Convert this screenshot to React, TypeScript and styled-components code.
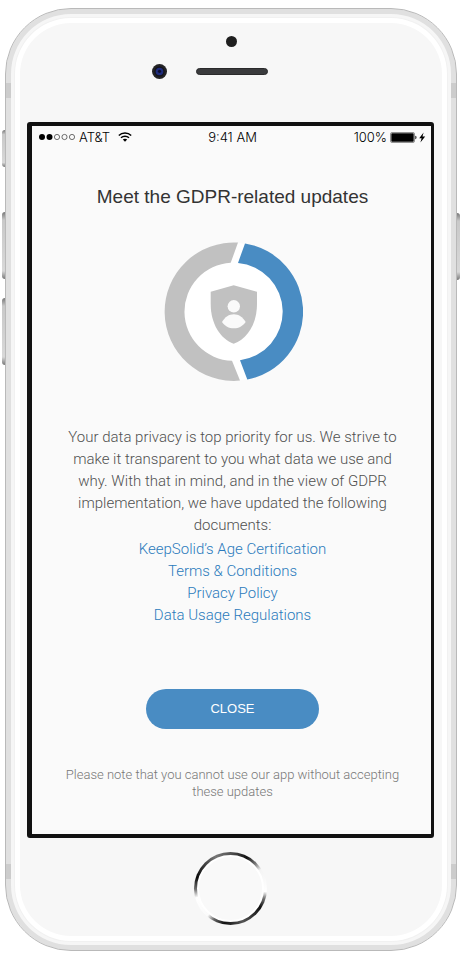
import React from "react";
import styled, { createGlobalStyle } from "styled-components";

const GlobalStyle = createGlobalStyle`
  *, *::before, *::after { box-sizing: border-box; }
  body {
    margin: 0;
    background: #ffffff;
    font-family: "Liberation Sans", Arial, sans-serif;
    color: #333333;
  }
`;

const Page = styled.div`
  padding: 8px 5px 4px;
`;

const Phone = styled.div`
  position: relative;
  display: flex;
  flex-direction: column;
  padding: 0 22px 0 21px;
  border: 1px solid #b9b9b9;
  border-radius: 66px;
  background: #f7f7f7;
  box-shadow:
    inset 0 0 0 5px #e0e0e0,
    inset 0 0 0 8px #f6f6f6,
    inset 0 0 0 9px #f1f1f1,
    inset 0 0 0 14px #ffffff;
`;

const SideKey = styled.span<{ $side: "left" | "right"; $top: number; $height: number }>`
  position: absolute;
  ${(p) => p.$side}: -4px;
  top: ${(p) => p.$top}px;
  width: 3px;
  height: ${(p) => p.$height}px;
  border-radius: ${(p) => (p.$side === "left" ? "3px 0 0 3px" : "0 3px 3px 0")};
  background: linear-gradient(#777777, #c9c9c9 12%, #d8d8d8 88%, #777777);
`;

const AntennaBand = styled.span<{ $side: "left" | "right"; $edge: "top" | "bottom" }>`
  position: absolute;
  ${(p) => p.$side}: 0;
  ${(p) => p.$edge}: ${(p) => (p.$edge === "top" ? "74px" : "71px")};
  width: 5px;
  height: 15px;
  background: #cccccc;
`;

const TopPanel = styled.div`
  display: flex;
  flex-direction: column;
  align-items: center;
  gap: 17px;
  height: 113px;
  padding: 27px 0 0 2px;
`;

const Sensor = styled.span`
  width: 11px;
  height: 11px;
  border-radius: 50%;
  background: #1f1f1f;
`;

const SpeakerRow = styled.div`
  display: grid;
  grid-template-columns: 1fr auto 1fr;
  align-items: center;
  align-self: stretch;
  column-gap: 29px;
`;

const Camera = styled.svg`
  justify-self: end;
  display: block;
`;

const Speaker = styled.span`
  width: 72px;
  height: 7px;
  border-radius: 4px;
  background: #3a3b3d;
  border: 1px solid #2a2a2b;
`;

const Screen = styled.main`
  display: flex;
  flex-direction: column;
  align-items: center;
  padding: 0 0 34px 2px;
  border: solid #111111;
  border-width: 4px 3px 4px 5px;
  border-radius: 3px;
  background: #fafafa;
`;

const StatusBar = styled.div`
  display: grid;
  grid-template-columns: 1fr auto 1fr;
  align-items: center;
  align-self: stretch;
  height: 22px;
  padding: 0 5px;
  font: 300 13px/16px Inter, "Liberation Sans", sans-serif;
  color: #000000;
`;

const StatusGroup = styled.div<{ $end?: boolean }>`
  display: flex;
  align-items: center;
  gap: ${(p) => (p.$end ? 3 : 4)}px;
  justify-content: ${(p) => (p.$end ? "flex-end" : "flex-start")};
`;

const Carrier = styled.span`
  margin-right: 4px;
`;

const Title = styled.h1`
  margin: 37px 0 0;
  font-size: 19px;
  line-height: 24px;
  font-weight: 400;
  color: #333333;
`;

const Emblem = styled.svg`
  display: block;
  margin-top: 33px;
`;

const Message = styled.p`
  max-width: 336px;
  margin: 44px 0 0;
  font: 300 15px/22px Roboto, "Liberation Sans", sans-serif;
  text-align: center;
  color: #505050;
`;

const Links = styled.ul`
  display: flex;
  flex-direction: column;
  align-items: center;
  margin: 2px 0 0;
  padding: 0;
  list-style: none;
`;

const DocumentLink = styled.a`
  display: block;
  font: 300 15px/22px Roboto, "Liberation Sans", sans-serif;
  color: #2b7abc;
  text-decoration: none;
`;

const CloseButton = styled.button`
  width: 173px;
  height: 40px;
  margin-top: 63px;
  border: 0;
  border-radius: 20px;
  background: #498cc3;
  color: #ffffff;
  font: 13px/16px "Liberation Sans", Arial, sans-serif;
  cursor: pointer;
`;

const Note = styled.p`
  max-width: 340px;
  margin: 37px 0 0;
  font: 300 13px/17px Roboto, "Liberation Sans", sans-serif;
  text-align: center;
  color: #777777;
`;

const BottomPanel = styled.div`
  display: flex;
  justify-content: center;
  padding: 14px 0 25px;
`;

const HomeButton = styled.button`
  width: 73px;
  height: 73px;
  padding: 3px;
  border: 0;
  border-radius: 50%;
  background: conic-gradient(
    from 0deg,
    #555555 0deg, #111111 28deg, #777777 45deg, #f4f4f4 58deg, #ffffff 95deg,
    #777777 106deg, #111111 122deg, #555555 160deg, #111111 190deg,
    #666666 208deg, #fafafa 220deg, #ffffff 255deg, #777777 268deg,
    #090909 288deg, #444444 315deg, #777777 335deg, #555555 360deg
  );
  cursor: pointer;

  &::before {
    content: "";
    display: block;
    height: 100%;
    border: 2px solid #ffffff;
    border-radius: 50%;
    background: #f9f9f9;
  }
`;

const documents = [
  "KeepSolid’s Age Certification",
  "Terms & Conditions",
  "Privacy Policy",
  "Data Usage Regulations",
];

function SignalDots() {
  return (
    <svg width="36" height="8" viewBox="0 0 36 8" aria-hidden="true">
      {[3, 10.5, 18, 25.5, 33].map((x, i) => (
        <circle
          key={x}
          cx={x}
          cy="4"
          r={i < 2 ? 3 : 2.6}
          fill={i < 2 ? "#000" : "none"}
          stroke={i < 2 ? "none" : "#333"}
          strokeWidth="0.7"
        />
      ))}
    </svg>
  );
}

function WifiIcon() {
  return (
    <svg width="14" height="10" viewBox="0 0 14 10" fill="none" stroke="#000" strokeWidth="1.5" aria-hidden="true">
      <path d="M0.8 3.5 C4.2 0.1 9.8 0.1 13.2 3.5" />
      <path d="M3 5.8 C5.2 3.6 8.8 3.6 11 5.8" />
      <path d="M4.8 7.6 C6 6.4 8 6.4 9.2 7.6 L7 9.8Z" fill="#000" stroke="none" />
    </svg>
  );
}

function BatteryIcon() {
  return (
    <svg width="36" height="11" viewBox="0 0 36 11" aria-hidden="true">
      <rect x="0.5" y="0.5" width="24" height="10" rx="1.5" fill="none" stroke="#777" strokeWidth="0.8" />
      <rect x="1.3" y="1.3" width="22.4" height="8.4" rx="0.8" fill="#000" />
      <path d="M25.4 3.8 C26.8 4 26.8 7 25.4 7.2Z" fill="#000" />
      <path d="M33.6 0.6 L29.2 6.3 H31.6 L30.4 10.4 L35.2 4.6 H32.5Z" fill="#000" />
    </svg>
  );
}

function ShieldEmblem() {
  return (
    <Emblem width="140" height="140" viewBox="0 0 140 140" role="img" aria-label="Data protection">
      <circle cx="70.7" cy="69.7" r="68.6" fill="#fff" />
      <path d="M75 0.6 A69.2 69.2 0 1 0 77 138.6 L69 118.7 A49 49 0 0 1 67.7 20.8Z" fill="#c1c1c1" />
      <path d="M82 1.4 A69.2 69.2 0 0 1 84.3 137.6 L77 118.3 A49 49 0 0 0 75 20.9Z" fill="#498cc3" />
      <path d="M70.7 43.3 L94 49.7 V62 C94 82 84 97 70.7 101.7 C57.4 97 47.7 82 47.7 62 V49.7Z" fill="#c1c1c1" />
      <circle cx="70.8" cy="64.3" r="6.2" fill="#fafafa" />
      <path d="M59 80 C62 75 66 72.3 70.8 72.3 S79.6 75 82.7 80 C79.5 84.2 76 86.3 70.8 86.3 S62 84.2 59 80Z" fill="#fafafa" />
    </Emblem>
  );
}

export default function App() {
  return (
    <>
      <GlobalStyle />
      <Page>
        <Phone>
          <SideKey $side="left" $top={121} $height={37} />
          <SideKey $side="left" $top={203} $height={67} />
          <SideKey $side="left" $top={289} $height={67} />
          <SideKey $side="right" $top={204} $height={67} />
          <AntennaBand $side="left" $edge="top" />
          <AntennaBand $side="right" $edge="top" />
          <AntennaBand $side="left" $edge="bottom" />
          <AntennaBand $side="right" $edge="bottom" />
          <TopPanel>
            <Sensor />
            <SpeakerRow>
              <Camera width="15" height="15" viewBox="0 0 15 15" aria-hidden="true">
                <circle cx="7.5" cy="7.5" r="7.5" fill="#242426" />
                <circle cx="7.5" cy="7.5" r="5.2" fill="#15151c" />
                <circle cx="7.5" cy="7.5" r="3.8" fill="#1f2c7c" />
                <circle cx="7.5" cy="7.3" r="1.6" fill="#0b0d30" />
              </Camera>
              <Speaker />
            </SpeakerRow>
          </TopPanel>
          <Screen>
            <StatusBar>
              <StatusGroup>
                <SignalDots />
                <Carrier>AT&amp;T</Carrier>
                <WifiIcon />
              </StatusGroup>
              <span>9:41 AM</span>
              <StatusGroup $end>
                <span>100%</span>
                <BatteryIcon />
              </StatusGroup>
            </StatusBar>
            <Title>Meet the GDPR-related updates</Title>
            <ShieldEmblem />
            <Message>
              Your data privacy is top priority for us. We strive to make it transparent to you what data we use and
              why. With that in mind, and in the view of GDPR implementation, we have updated the following documents:
            </Message>
            <Links>
              {documents.map((name) => (
                <li key={name}>
                  <DocumentLink href="#">{name}</DocumentLink>
                </li>
              ))}
            </Links>
            <CloseButton type="button">CLOSE</CloseButton>
            <Note>Please note that you cannot use our app without accepting these updates</Note>
          </Screen>
          <BottomPanel>
            <HomeButton type="button" aria-label="Home" />
          </BottomPanel>
        </Phone>
      </Page>
    </>
  );
}
